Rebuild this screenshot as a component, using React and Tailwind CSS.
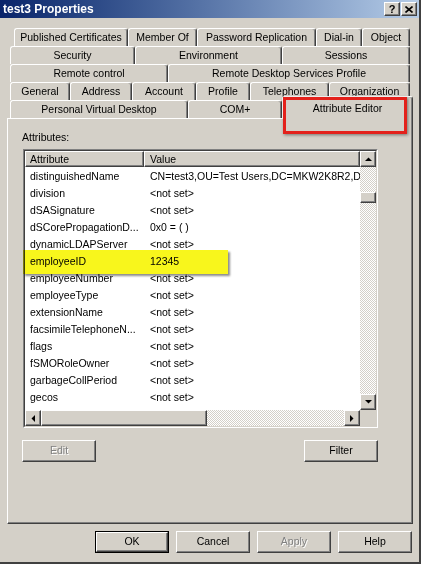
import React from "react";

const raised =
  "border border-t-white border-l-white border-r-[#404040] border-b-[#404040] shadow-[inset_-1px_-1px_#808080] bg-[#d4d0c8]";
const checker =
  "bg-[image:repeating-conic-gradient(#d4d0c8_0%_25%,#ffffff_0%_50%)] bg-[length:2px_2px]";

const tabRows = [
  {
    ml: "ml-[14px]",
    tabs: [
      ["Published Certificates", "w-[114px]"],
      ["Member Of", "w-[69px]"],
      ["Password Replication", "w-[119px]"],
      ["Dial-in", "w-[46px]"],
      ["Object", "w-[48px]"],
    ],
  },
  {
    ml: "ml-[10px]",
    tabs: [
      ["Security", "w-[125px]"],
      ["Environment", "w-[147px]"],
      ["Sessions", "w-[128px]"],
    ],
  },
  {
    ml: "ml-[10px]",
    tabs: [
      ["Remote control", "w-[158px]"],
      ["Remote Desktop Services Profile", "w-[242px]"],
    ],
  },
  {
    ml: "ml-[10px]",
    tabs: [
      ["General", "w-[60px]"],
      ["Address", "w-[62px]"],
      ["Account", "w-[64px]"],
      ["Profile", "w-[54px]"],
      ["Telephones", "w-[79px]"],
      ["Organization", "w-[81px]"],
    ],
  },
];

const rows = [
  ["distinguishedName", "CN=test3,OU=Test Users,DC=MKW2K8R2,DC=local"],
  ["division", "<not set>"],
  ["dSASignature", "<not set>"],
  ["dSCorePropagationD...", "0x0 = ( )"],
  ["dynamicLDAPServer", "<not set>"],
  ["employeeID", "12345"],
  ["employeeNumber", "<not set>"],
  ["employeeType", "<not set>"],
  ["extensionName", "<not set>"],
  ["facsimileTelephoneN...", "<not set>"],
  ["flags", "<not set>"],
  ["fSMORoleOwner", "<not set>"],
  ["garbageCollPeriod", "<not set>"],
  ["gecos", "<not set>"],
  ["generationQualifier", "<not set>"],
];

function Tab({ label, w }) {
  return (
    <div
      className={`${w} h-[18px] shrink-0 flex items-center justify-center rounded-t-[3px] border-t border-l border-r border-t-white border-l-white border-r-[#404040] shadow-[inset_-1px_0_#808080] bg-[#d4d0c8] whitespace-nowrap leading-[13px]`}
    >
      {label}
    </div>
  );
}

function Arrow({ dir }) {
  const pts = {
    up: "0,4 7,4 3.5,0.5",
    down: "0,0 7,0 3.5,3.5",
    left: "4,0 4,7 0.5,3.5",
    right: "0,0 0,7 3.5,3.5",
  }[dir];
  const vertical = dir === "up" || dir === "down";
  return (
    <svg width={vertical ? 7 : 4} height={vertical ? 4 : 7} viewBox={vertical ? "0 0 7 4" : "0 0 4 7"}>
      <polygon points={pts} fill="#000" />
    </svg>
  );
}

function ScrollBtn({ dir }) {
  return (
    <div className={`w-[16px] h-[16px] shrink-0 flex items-center justify-center ${raised}`}>
      <Arrow dir={dir} />
    </div>
  );
}

function Button({ label, disabled, isDefault, w = "w-[74px]" }) {
  const inner = (
    <div
      className={`w-full h-full flex items-center justify-center ${raised} ${
        disabled ? "text-[#808080] [text-shadow:1px_1px_0_#ffffff]" : "text-black"
      }`}
    >
      {label}
    </div>
  );
  if (isDefault) {
    return <div className={`${w} h-[22px] border border-black`}>{inner}</div>;
  }
  return <div className={`${w} h-[22px]`}>{inner}</div>;
}

export default function App() {
  return (
    <div className="relative w-[421px] h-[564px] overflow-hidden bg-[#d4d0c8] border-r-2 border-b-2 border-r-[#404040] border-b-[#404040] flex flex-col font-['Liberation_Sans',Arial,sans-serif] text-[10.5px] text-black">
      {/* Title bar */}
      <div className="h-[18px] shrink-0 flex items-center justify-between pl-[3px] pr-[2px] bg-linear-to-r from-[#0a246a] to-[#b6cde8]">
        <span className="text-white font-bold text-[12px] leading-[14px]">test3 Properties</span>
        <div className="flex gap-[1px]">
          <div className={`w-[16px] h-[14px] flex items-center justify-center ${raised} font-bold text-[11px] leading-[11px]`}>?</div>
          <div className={`w-[16px] h-[14px] flex items-center justify-center ${raised}`}>
            <svg width="8" height="7" viewBox="0 0 8 7">
              <path d="M0.5 0.5 L7.5 6.5 M7.5 0.5 L0.5 6.5" stroke="#000" strokeWidth="1.6" />
            </svg>
          </div>
        </div>
      </div>

      {/* Tabs */}
      <div className="pt-[10px] flex flex-col">
        {tabRows.map((row, i) => (
          <div key={i} className={`${row.ml} flex h-[18px]`}>
            {row.tabs.map(([label, w]) => (
              <Tab key={label} label={label} w={w} />
            ))}
          </div>
        ))}
        <div className="ml-[10px] flex h-[18px] items-end">
          <Tab label="Personal Virtual Desktop" w="w-[178px]" />
          <Tab label="COM+" w="w-[94px]" />
          <div className="relative z-10 w-[131px] h-[23px] -mb-[1px] shrink-0 flex justify-center pt-[5px] rounded-t-[3px] border-t border-l border-r border-t-white border-l-white border-r-[#404040] shadow-[inset_-1px_0_#808080] bg-[#d4d0c8] leading-[13px] whitespace-nowrap">
            Attribute Editor
          </div>
        </div>
      </div>

      {/* Panel */}
      <div className="ml-[7px] w-[406px] h-[406px] shrink-0 border border-t-white border-l-white border-r-[#404040] border-b-[#404040] shadow-[inset_-1px_-1px_#808080] pl-[15px] flex flex-col">
        <div className="mt-[12px] -ml-[1px] leading-[13px]">Attributes:</div>
        <div className="mt-[5px] w-[355px] h-[279px] border border-t-[#808080] border-l-[#808080] border-r-white border-b-white">
          <div className="w-full h-full border border-t-[#404040] border-l-[#404040] border-r-[#d4d0c8] border-b-[#d4d0c8] bg-white grid grid-cols-[1fr_16px] grid-rows-[1fr_16px]">
            <div className="flex flex-col overflow-hidden">
              <div className="flex h-[16px] shrink-0">
                <div className={`w-[119px] shrink-0 pl-[4px] flex items-center leading-[13px] ${raised}`}>Attribute</div>
                <div className={`flex-1 pl-[5px] flex items-center leading-[13px] ${raised}`}>Value</div>
              </div>
              {rows.map(([a, v]) => (
                <div key={a} className="flex h-[17px] shrink-0 items-center pt-[2px] whitespace-nowrap leading-[13px]">
                  <div className="w-[119px] shrink-0 pl-[5px] overflow-hidden">{a}</div>
                  <div className="flex-1 pl-[6px] overflow-hidden">{v}</div>
                </div>
              ))}
            </div>
            <div className="flex flex-col">
              <ScrollBtn dir="up" />
              <div className={`flex-1 flex flex-col pt-[25px] ${checker}`}>
                <div className={`h-[11px] w-[16px] ${raised}`} />
              </div>
              <ScrollBtn dir="down" />
            </div>
            <div className="flex">
              <ScrollBtn dir="left" />
              <div className={`w-[166px] h-[16px] shrink-0 ${raised}`} />
              <div className={`flex-1 ${checker}`} />
              <ScrollBtn dir="right" />
            </div>
            <div className="bg-[#d4d0c8]" />
          </div>
        </div>
        <div className="mt-[12px] -ml-[1px] w-[356px] flex justify-between">
          <Button label="Edit" disabled />
          <Button label="Filter" />
        </div>
      </div>

      {/* Bottom buttons */}
      <div className="mt-[7px] pr-[7px] flex justify-end gap-[7px]">
        <Button label="OK" isDefault />
        <Button label="Cancel" />
        <Button label="Apply" disabled />
        <Button label="Help" />
      </div>

      {/* Annotations */}
      <div className="absolute z-20 left-[23px] top-[250px] w-[205px] h-[24px] bg-[#f8f61c] mix-blend-multiply shadow-[2px_2px_2px_rgba(0,0,0,0.45)]" />
      <div className="absolute z-20 left-[283px] top-[97px] w-[124px] h-[37px] border-[3px] border-[#e3211b] shadow-[1px_1px_3px_rgba(0,0,0,0.45)]" />
    </div>
  );
}
